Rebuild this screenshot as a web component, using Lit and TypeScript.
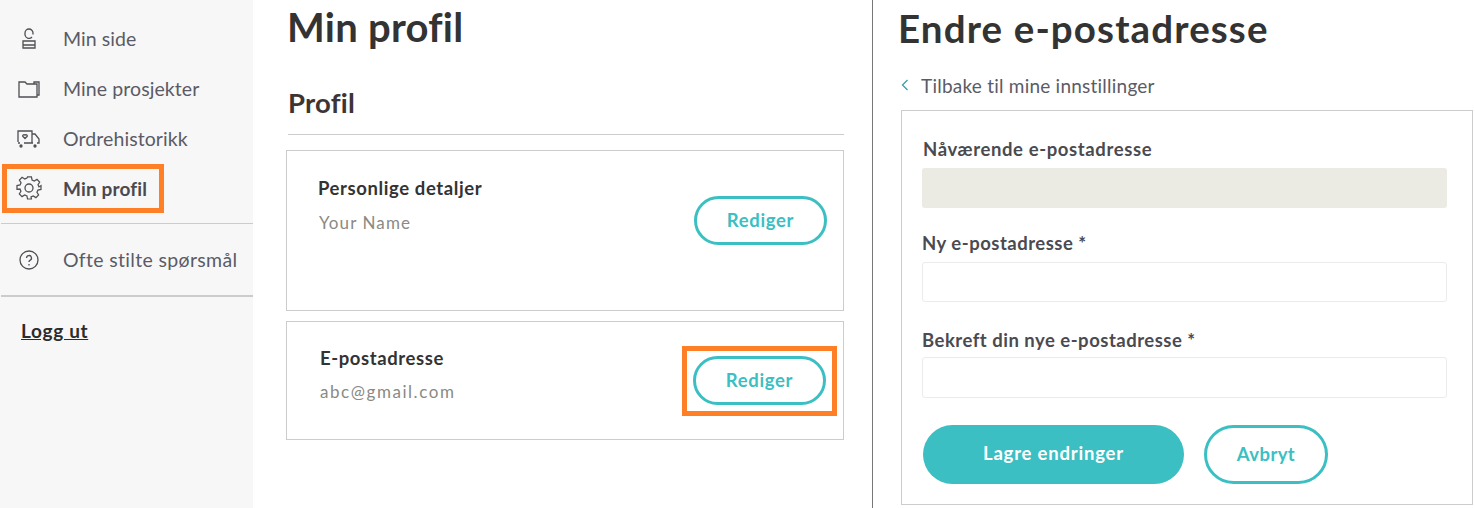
import { LitElement, html, css } from "lit";
import { customElement } from "lit/decorators.js";

@customElement("app-root")
export class AppRoot extends LitElement {
  static styles = css`
    :host { display: grid; grid-template-columns: 253px 620px 602px; width: 1475px; height: 508px; overflow: hidden; background: #fff; font-family: Lato, "Liberation Sans", sans-serif; color: #333; }
    * { box-sizing: border-box; }
    .side { background: #f7f7f7; position: relative; padding-top: 14px; }
    .item { display: flex; align-items: center; height: 50px; color: #5b5b66; font-size: 19.5px; letter-spacing: .08px; padding-bottom: 2px; }
    .ic { width: 63px; display: flex; justify-content: center; padding-right: 6px; flex: none; margin-top: 2px; }
    .ic svg { display: block; fill: none; stroke: #4f4f55; stroke-width: 1.3; }
    .item.on { font-weight: 700; color: #4a4a50; font-size: 19px; letter-spacing: .15px; padding-bottom: 2px; }
    .item.on .ic { margin-top: 0; }
    .div1 { border-top: 1px solid #ccc; margin: 9px 0 0 1px; }
    .item.faq { height: 71px; padding-bottom: 0; letter-spacing: .33px; }
    .item.faq .ic { margin-top: 0; }
    .div2 { border-top: 2px solid #ccc; margin: 0 0 0 1px; }
    .logout { display: block; margin: 24px 0 0 21px; font-size: 19px; font-weight: 700; color: #2c2c2c; text-decoration: underline; line-height: 20px; letter-spacing: .65px; }
    .mark { position: absolute; border: 5px solid #ff7f27; pointer-events: none; }
    .mark.a { left: 2px; top: 164px; width: 162px; height: 49px; }
    .main { border-right: 1px solid #777; padding-left: 35px; padding-right: 28px; position: relative; }
    h1 { margin: 0; font-weight: 700; }
    .main h1 { font-size: 40px; line-height: 54px; letter-spacing: .25px; color: #333; margin-left: -1px; }
    h2 { margin: 29px 0 0; font-size: 27.5px; font-weight: 700; line-height: 40px; padding-bottom: 11px; border-bottom: 1px solid #ccc; color: #3d3535; letter-spacing: .2px; }
    .card { border: 1px solid #ccc; margin-left: -2px; display: flex; justify-content: space-between; align-items: flex-start; }
    .c1 { height: 161px; margin-top: 15px; padding: 25px 16px 0 31px; }
    .c2 { height: 119px; margin-top: 10px; padding: 24px 17px 0 33px; }
    .c1 .btn { margin-top: 20px; }
    .c2 .btn { margin-top: 10px; }
    .t { font-weight: 700; font-size: 18.5px; line-height: 24px; letter-spacing: .6px; color: #333; }
    .s { font-size: 17px; line-height: 24px; color: #8a8a84; letter-spacing: 1.1px; margin-top: 11px; padding-left: 1px; }
    .c2 .s { margin-top: 10px; padding-left: 0; letter-spacing: 1.55px; }
    .btn { display: flex; align-items: center; justify-content: center; border: 3px solid #3bbfc3; border-radius: 25px; width: 133px; height: 49px; color: #3bbfc3; font-weight: 700; font-size: 18.5px; letter-spacing: .65px; background: #fff; padding-bottom: 2px; }
    .mark.b { left: 429px; top: 346px; width: 155px; height: 70px; }
    .right { padding-left: 25px; }
    .right h1 { font-size: 38.5px; line-height: 56px; letter-spacing: 1.12px; color: #333; }
    .back { display: flex; align-items: center; height: 30px; margin: 14px 0 0 3px; color: #5b5b66; font-size: 19px; letter-spacing: .23px; }
    .back svg { fill: none; stroke: #3b9ea3; stroke-width: 1.3; margin-right: 12px; flex: none; }
    .panel { width: 572px; height: 395px; margin: 10px 0 0 3px; border: 1px solid #ccc; padding: 25px 25px 0 20px; }
    .lbl { font-weight: 700; font-size: 18.5px; line-height: 26px; color: #4a4a50; letter-spacing: .62px; }
    .l1 { padding-left: 1px; }
    .l2 { margin-top: 22px; letter-spacing: .5px; }
    .l3 { margin-top: 25px; letter-spacing: .5px; }
    .in { height: 40px; border: 1px solid #ebebeb; border-radius: 3px; margin-top: 6px; }
    .in.ro { background: #ebeae3; border: none; margin-top: 6px; }
    .in.i3 { height: 41px; margin-top: 4px; }
    .acts { display: flex; gap: 20px; margin: 27px 0 0 1px; }
    .pri, .sec { display: flex; align-items: center; justify-content: center; height: 59px; border-radius: 30px; font-weight: 700; font-size: 18.5px; letter-spacing: .4px; }
    .pri { width: 261px; background: #3bbfc3; color: #fff; padding-bottom: 3px; letter-spacing: .8px; }
    .sec { width: 124px; border: 3px solid #3bbfc3; color: #3bbfc3; padding-bottom: 1px; }
  `;

  render() {
    return html`
      <nav class="side">
        <div class="item"><span class="ic"><svg width="20" height="22" viewBox="0 0 20 22"><path d="M14 6.500V5a4 4 0 1 0-8 0v2a4 4 0 0 0 7 2"/><path d="M4 13h12v4H4zM4 17h12v3H4z"/></svg></span>Min side</div>
        <div class="item"><span class="ic"><svg width="22" height="18" viewBox="0 0 22 18"><path d="M1 2h6l2 2h10v13H1zM16 4V2h5v13h-2"/></svg></span>Mine prosjekter</div>
        <div class="item"><span class="ic"><svg width="23" height="18" viewBox="0 0 23 18"><path d="M1 12V1h14v12M15 4h3l4 5v4h-2M1 13h2M7 13h9"/><path d="M8 8.500 5.700 6.200a1.300 1.300 0 0 1 2.300-1 1.300 1.300 0 0 1 2.300 1z"/><circle cx="4" cy="16" r="1" fill="#4f4f55"/><circle cx="18" cy="16" r="1" fill="#4f4f55"/></svg></span>Ordrehistorikk</div>
        <div class="item on"><span class="ic"><svg width="26" height="26" viewBox="0 0 26 26"><circle cx="13" cy="13" r="4"/><path d="M11 2h4l.7 3.200 2.300 1 2.800-1.700 2.800 2.800-1.700 2.800 1 2.300L25 11v4l-3.200.7-1 2.300 1.700 2.800-2.800 2.800-2.800-1.700-2.300 1L15 25h-4l-.7-3.200-2.300-1-2.800 1.700-2.800-2.800 1.700-2.800-1-2.300L0 15v-4l3.200-.7 1-2.300-1.700-2.800 2.800-2.800 2.800 1.700 2.300-1z" transform="translate(1 0) scale(.96)"/></svg></span>Min profil</div>
        <div class="div1"></div>
        <div class="item faq"><span class="ic"><svg width="20" height="20" viewBox="0 0 20 20"><circle cx="10" cy="10" r="9"/><path d="M7.500 8a2.500 2.500 0 1 1 3.500 2.300c-.7.3-1 .8-1 1.700"/><path d="M10 14v1.500"/></svg></span>Ofte stilte spørsmål</div>
        <div class="div2"></div>
        <a class="logout">Logg ut</a>
        <div class="mark a"></div>
      </nav>
      <section class="main">
        <h1>Min profil</h1>
        <h2>Profil</h2>
        <div class="card c1">
          <div><div class="t">Personlige detaljer</div><div class="s">Your Name</div></div>
          <div class="btn">Rediger</div>
        </div>
        <div class="card c2">
          <div><div class="t">E-postadresse</div><div class="s">abc@gmail.com</div></div>
          <div class="btn">Rediger</div>
        </div>
        <div class="mark b"></div>
      </section>
      <section class="right">
        <h1>Endre e-postadresse</h1>
        <div class="back"><svg width="8" height="12" viewBox="0 0 8 12"><path d="M6.500 1 1.500 6l5 5"/></svg>Tilbake til mine innstillinger</div>
        <div class="panel">
          <div class="lbl l1">Nåværende e-postadresse</div>
          <div class="in ro"></div>
          <div class="lbl l2">Ny e-postadresse *</div>
          <div class="in"></div>
          <div class="lbl l3">Bekreft din nye e-postadresse *</div>
          <div class="in i3"></div>
          <div class="acts"><div class="pri">Lagre endringer</div><div class="sec">Avbryt</div></div>
        </div>
      </section>
    `;
  }
}
